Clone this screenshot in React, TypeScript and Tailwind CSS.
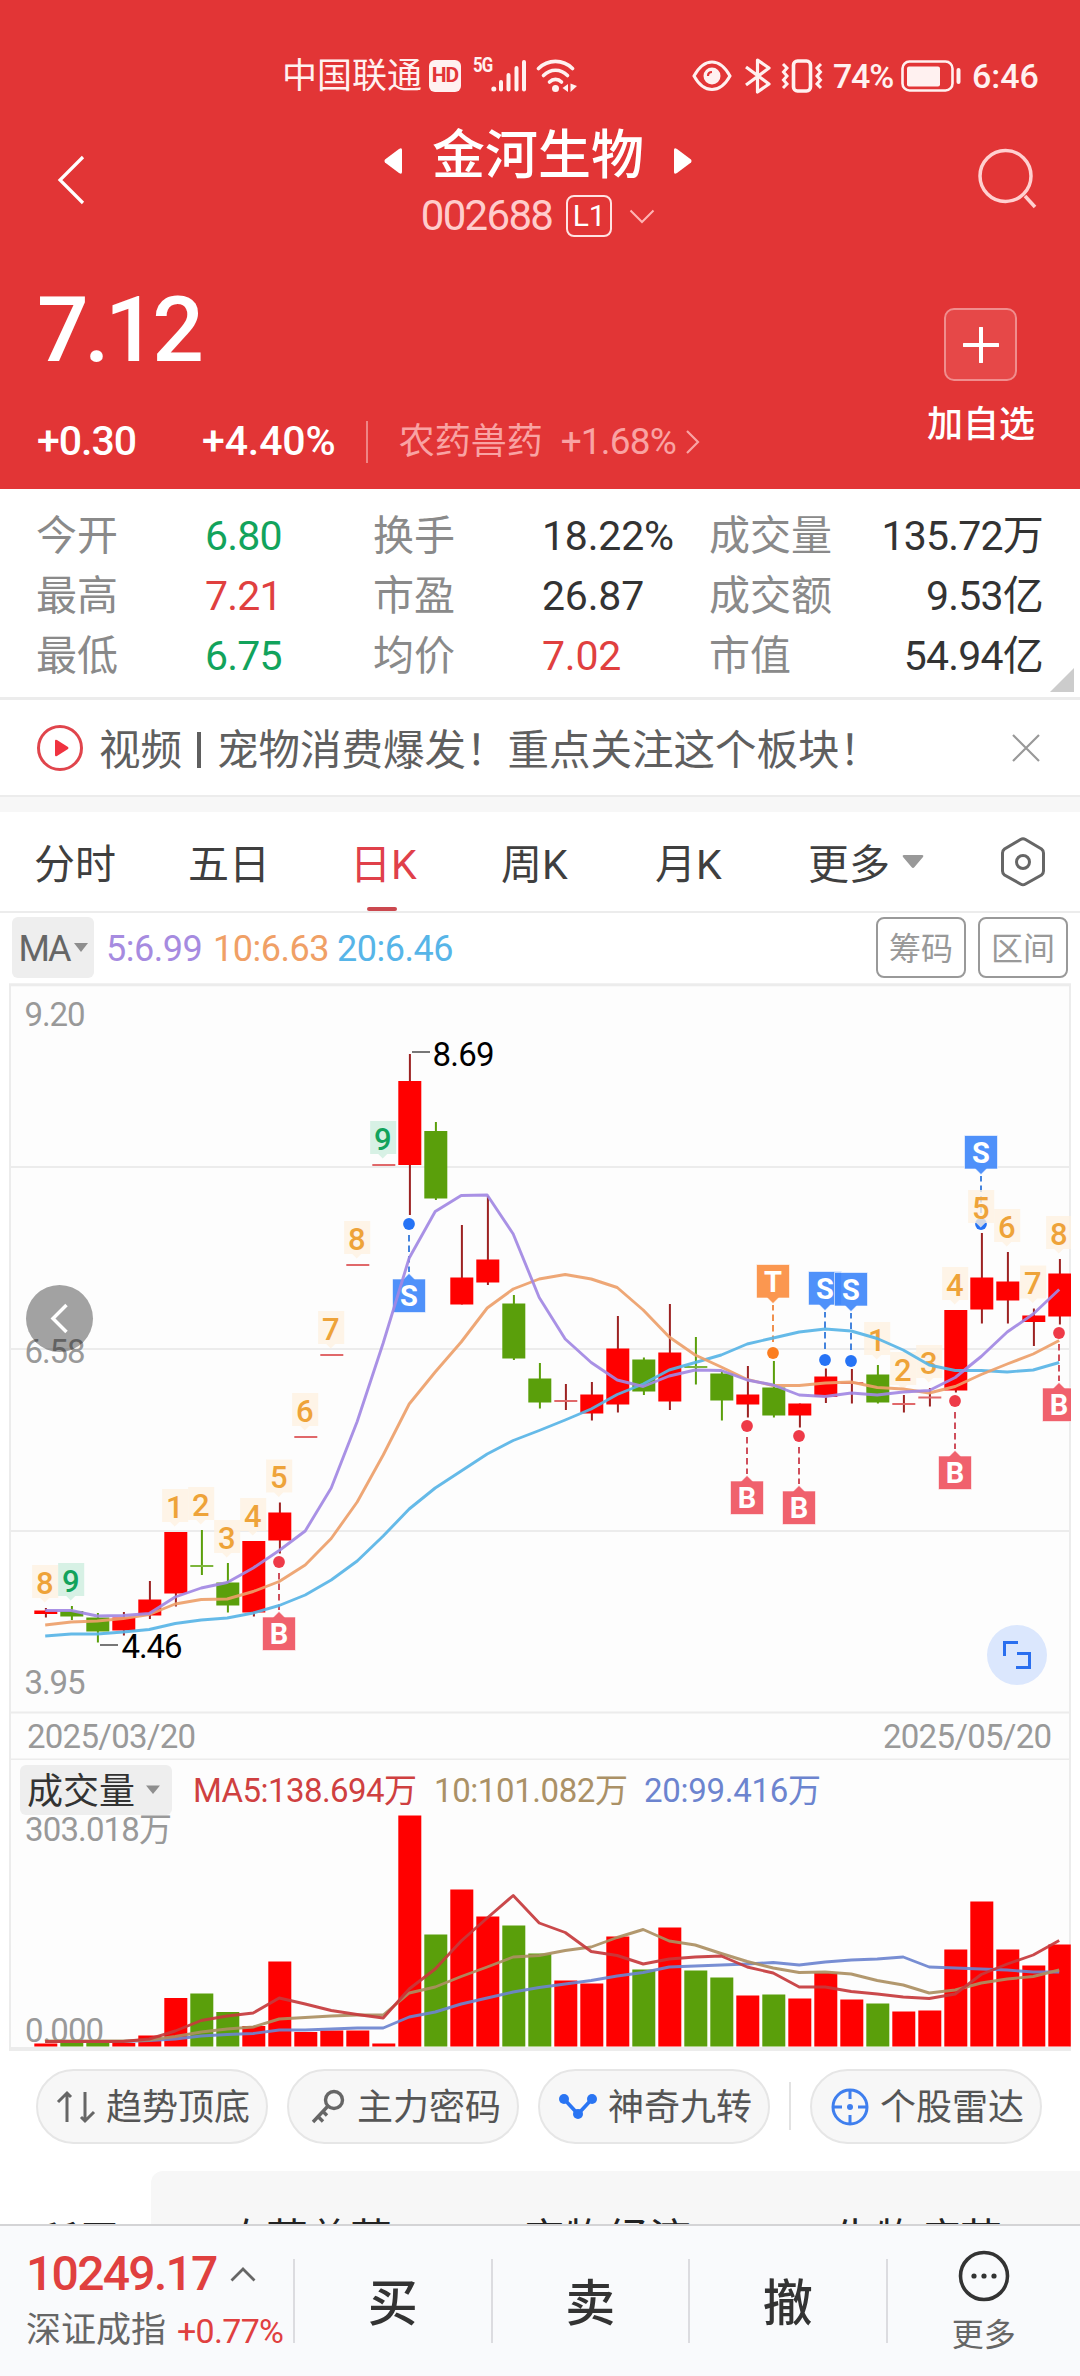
import React from "react";

// [high, bodyTop, bodyBottom, low, direction]
type Candle = [number, number, number, number, "up" | "down"];

const candles: Candle[] = [
  [1608, 1610.5, 1614, 1617.5, "up"],
  [1606, 1611, 1616.5, 1620, "down"],
  [1613, 1617.5, 1631.5, 1642.5, "down"],
  [1612, 1617.5, 1630.5, 1635.5, "up"],
  [1581, 1599.5, 1615.5, 1619, "up"],
  [1532, 1532, 1593.5, 1606.5, "up"],
  [1530, 1565, 1567, 1575, "down"],
  [1563, 1582.5, 1605.5, 1612.5, "down"],
  [1541, 1541, 1612.5, 1616.5, "up"],
  [1502.5, 1512.5, 1540.5, 1553.5, "up"],
  [1436, 1436, 1438, 1438, "up"],
  [1354, 1354, 1356, 1356, "up"],
  [1264, 1264, 1266, 1266, "up"],
  [1164, 1164, 1166, 1166, "up"],
  [1054, 1081, 1165, 1215, "up"],
  [1122, 1131, 1198.5, 1200, "down"],
  [1225, 1277.5, 1304.5, 1304.5, "up"],
  [1196, 1259.5, 1282.5, 1285, "up"],
  [1295, 1303.5, 1358.5, 1360, "down"],
  [1363, 1378.5, 1402.5, 1408.5, "down"],
  [1384, 1400, 1402, 1410, "up"],
  [1382, 1394.5, 1413.5, 1420.5, "up"],
  [1316, 1348.5, 1404.5, 1412.5, "up"],
  [1357.5, 1359.5, 1391.5, 1395, "down"],
  [1304, 1352.5, 1401.5, 1410, "up"],
  [1337, 1366, 1368, 1384.5, "down"],
  [1371, 1373.5, 1400.5, 1420.5, "down"],
  [1366, 1394.5, 1404.5, 1417.5, "up"],
  [1361, 1387.5, 1415.5, 1417.5, "down"],
  [1403.5, 1403.5, 1415.5, 1427.5, "up"],
  [1368.5, 1376.5, 1397, 1403, "up"],
  [1369, 1382, 1384, 1403.5, "up"],
  [1365, 1374.5, 1402.5, 1403.5, "down"],
  [1395, 1403, 1405, 1412.5, "up"],
  [1388, 1396.5, 1398.5, 1406.5, "up"],
  [1310, 1310, 1390.5, 1392.5, "up"],
  [1233, 1277.5, 1309.5, 1323.5, "up"],
  [1252, 1281.5, 1300.5, 1323.5, "up"],
  [1308.5, 1315.5, 1322, 1346, "up"],
  [1259, 1273.5, 1316.5, 1324.5, "up"],
];

const ma5 = [
  1610.5, 1610.5, 1616, 1615.5, 1613.5, 1597, 1588, 1582.5, 1568, 1550.5, 1531,
  1488, 1421.5, 1343, 1258, 1211.5, 1195.5, 1195, 1234, 1297.5, 1339, 1362.5,
  1380, 1386.5, 1376, 1370, 1370.5, 1380, 1385, 1395, 1396.5, 1393, 1395, 1392,
  1390.5, 1377.5, 1356.5, 1332, 1314, 1289.5,
];
const ma10 = [
  1625, 1622, 1621, 1618.5, 1614.5, 1604, 1599.5, 1599, 1591.5, 1581.5, 1565,
  1538.5, 1502, 1455, 1404, 1372, 1342, 1308, 1289, 1279, 1274.5, 1279, 1287.5,
  1310, 1337, 1355, 1367, 1379.5, 1385.5, 1385.5, 1383, 1382, 1387.5, 1389,
  1393, 1386.5, 1374.5, 1364, 1354, 1340.5,
];
const ma20 = [
  1636, 1634, 1634, 1632, 1629.5, 1623.5, 1620, 1618, 1613, 1605.5, 1595, 1580,
  1561, 1536, 1509, 1488, 1471, 1454, 1440.5, 1430.5, 1420, 1409, 1394.5, 1384,
  1370, 1362.5, 1355, 1344, 1338, 1332, 1329, 1331, 1338.5, 1350, 1365, 1370.5,
  1370.5, 1372, 1370, 1362.5,
];

const volumes = [
  2043.5, 2043, 2043, 2043, 2035.5, 1998, 1993.5, 2012, 2026, 1961.5, 2032,
  2030.5, 2030.5, 2043.5, 1815.5, 1934.5, 1889.5, 1916.5, 1925.5, 1953.5, 1980.5,
  1983.5, 1936.5, 1969.5, 1927.5, 1970.5, 1977.5, 1995.5, 1994.5, 1998.5, 1973,
  1999.5, 2003.5, 2011.5, 2010.5, 1949.5, 1901.5, 1949.5, 1965.5, 1944.5,
];
const vol5 = [
  2041.5, 2041.5, 2041.5, 2041.5, 2039, 2031, 2020.5, 2016, 2013, 1998, 2004,
  2010.5, 2014.5, 2018, 1989, 1969, 1941, 1918, 1895.5, 1923, 1932.5, 1951.5,
  1955.5, 1964, 1959, 1957, 1956, 1967, 1973, 1987, 1987, 1991.5, 1994, 1997,
  1998.5, 1994, 1974.5, 1964, 1955, 1940.5,
];
const vol10 = [
  2041, 2041, 2041, 2041, 2040, 2036.5, 2032, 2029, 2027, 2019, 2017.5, 2016,
  2015, 2015, 1993, 1987, 1976.5, 1967, 1957, 1955.5, 1950.5, 1947, 1937.5,
  1929.5, 1941, 1945, 1953.5, 1961.5, 1968, 1972.5, 1972, 1974, 1980.5, 1985,
  1993, 1990, 1983, 1979, 1976.5, 1970,
];
const vol20 = [
  2041.5, 2041.5, 2041.5, 2041.5, 2040.5, 2039, 2036, 2034.5, 2033.5, 2030,
  2030, 2029, 2028, 2028, 2017, 2012, 2004, 1998, 1992, 1987.5, 1984, 1980.5,
  1976, 1972.5, 1967, 1966, 1965, 1964, 1962.5, 1965, 1962, 1960, 1959, 1957,
  1967, 1968, 1969, 1970, 1972, 1972,
];

const counts: [number, string][] = [
  [0, "8"], [1, "9"], [5, "1"], [6, "2"], [7, "3"], [8, "4"], [9, "5"],
  [10, "6"], [11, "7"], [12, "8"], [13, "9"], [32, "1"], [33, "2"], [34, "3"],
  [35, "4"], [36, "5"], [37, "6"], [38, "7"], [39, "8"],
];

// index, letter, dot y, label below or above the dot
const trades: [number, "B" | "S" | "T", number, "below" | "above"][] = [
  [9, "B", 1562, "below"],
  [14, "S", 1224, "below"],
  [27, "B", 1426, "below"],
  [28, "T", 1353, "above"],
  [29, "B", 1436, "below"],
  [30, "S", 1360, "above"],
  [31, "S", 1361, "above"],
  [35, "B", 1401, "below"],
  [36, "S", 1224, "above"],
  [39, "B", 1333, "below"],
];

const tradeColors = {
  B: { box: "#ef5562", dot: "#ee3a48", dash: "#cf4f5c" },
  S: { box: "#4289fa", dot: "#2673f5", dash: "#4584dd" },
  T: { box: "#fb8f43", dot: "#fb7d20", dash: "#f0904e" },
};

const cx = (i: number) => 45.8 + i * 26;

const points = (ys: number[]) =>
  ys.map((y, i) => `${cx(i) - 0.6},${y}`).join(" ");

const Line = ({ ys, color }: { ys: number[]; color: string }) => (
  <polyline
    points={points(ys)}
    fill="none"
    stroke={color}
    strokeWidth="2.900"
    strokeLinejoin="round"
    opacity="0.92"
  />
);

const CandleShape = ({ candle, x }: { candle: Candle; x: number }) => {
  const [high, top, bottom, low, dir] = candle;
  const thin = bottom - top <= 2;
  const flat = thin && high === top;
  const up = dir === "up";
  return (
    <g>
      {!flat && (
        <rect
          x={x - 0.9}
          y={high}
          width="2"
          height={low - high}
          fill={up ? "#9c2222" : "#5a9f0b"}
        />
      )}
      <rect
        x={x - 11.5}
        y={top}
        width="23"
        height={bottom - top}
        fill={thin ? (up ? "#e0686a" : "#7db53c") : up ? "#ff0000" : "#5a9f0b"}
      />
    </g>
  );
};

const Count = ({ x, y, text }: { x: number; y: number; text: string }) => {
  const nine = text === "9";
  return (
    <g>
      <path
        d={`M${x - 13} ${y}h26v33h-9l-4.500 4.500l-4.500 -4.500h-8z`}
        fill={nine ? "#cdeedf" : "#fef1e1"}
        fillOpacity="0.8"
      />
      <text
        x={x - 0.5}
        y={y + 28.5}
        fontSize="31"
        fontWeight="500"
        textAnchor="middle"
        fill={nine ? "#12a35c" : "#eea339"}
      >
        {text}
      </text>
    </g>
  );
};

const Trade = ({
  x,
  y,
  letter,
  side,
}: {
  x: number;
  y: number;
  letter: "B" | "S" | "T";
  side: "below" | "above";
}) => {
  const color = tradeColors[letter];
  const below = side === "below";
  const top = below ? y + 55 : y - 88.5;
  return (
    <g>
      <circle cx={x} cy={y} r="5.900" fill={color.dot} />
      <path
        d={below ? `M${x} ${y + 11}V${y + 48}` : `M${x} ${y - 11}V${y - 48}`}
        stroke={color.dash}
        strokeWidth="2"
        strokeDasharray="6.500 4"
      />
      <path
        d={
          below
            ? `M${x - 16.5} ${top}h11l5.500 -5.500l5.500 5.500h11v33.500h-33z`
            : `M${x - 16.5} ${top}h33v33.500h-11l-5.500 5.500l-5.500 -5.500h-11z`
        }
        fill={color.box}
        fillOpacity="0.93"
        stroke="#fff"
        strokeOpacity="0.6"
        strokeWidth="1"
      />
      <text
        x={x}
        y={top + 27}
        fontSize="29"
        fontWeight="700"
        textAnchor="middle"
        fill="#fff"
      >
        {letter}
      </text>
    </g>
  );
};

const PriceChart = () => (
  <svg width="1080" height="777" viewBox="0 983 1080 777" className="block">
    <defs>
      <clipPath id="plot">
        <rect x="10" y="984" width="1061" height="776" />
      </clipPath>
    </defs>
    <rect x="10" y="984" width="1061" height="776" fill="#fdfdfd" />
    <path
      d="M10 1167H1070M10 1349H1070M10 1531H1070M10 1712.500H1070M10 1759.500H1070"
      stroke="#ececec"
      strokeWidth="2"
    />
    <path d="M9 984.700H1071" stroke="#ececec" strokeWidth="3" />
    <path d="M10 984V1760M1070 984V1760" stroke="#ececec" strokeWidth="2" />

    <g fontSize="33" fill="#999">
      <text x="24.500" y="1026" textLength="61">9.20</text>
      <text x="24.500" y="1363" textLength="61">6.58</text>
      <text x="24.500" y="1694" textLength="61">3.95</text>
      <text x="27" y="1748" textLength="169">2025/03/20</text>
      <text x="883" y="1748" textLength="169">2025/05/20</text>
    </g>

    <g clipPath="url(#plot)">
      {candles.map((candle, i) => (
        <CandleShape key={i} candle={candle} x={cx(i)} />
      ))}
      {trades.map(([i, letter, y, side]) => (
        <Trade key={i} x={cx(i) - 0.8} y={y} letter={letter} side={side} />
      ))}
      {counts.map(([i, text]) => (
        <Count key={i} x={cx(i) - 0.6} y={candles[i][0] - 43} text={text} />
      ))}
      <Line ys={ma20} color="#58b4e6" />
      <Line ys={ma10} color="#eda06a" />
      <Line ys={ma5} color="#a288e3" />
    </g>

    <path d="M412 1052H430M100 1645H118" stroke="#777" strokeWidth="2" />
    <g fontSize="33" fill="#000">
      <text x="432.500" y="1066" textLength="62">8.69</text>
      <text x="121.500" y="1658" textLength="61">4.46</text>
    </g>

    <circle cx="59.500" cy="1318.500" r="33.500" fill="#000" fillOpacity="0.36" />
    <path
      d="M66.500 1305L53 1318.500L66.500 1332"
      fill="none"
      stroke="#fff"
      strokeWidth="3.500"
    />
    <circle cx="1017" cy="1655" r="30" fill="#dbe7fd" />
    <path
      d="M1018 1642.500H1004.500V1656M1016 1667.500H1029.500V1653.500H1017"
      fill="none"
      stroke="#2a6fef"
      strokeWidth="3"
    />
  </svg>
);

const VolumeChart = () => (
  <svg width="1080" height="292" viewBox="0 1760 1080 292" className="block">
    <rect x="10" y="1760" width="1061" height="288" fill="#fdfdfd" />
    <path d="M10 1760V2050M1070 1760V2050" stroke="#ececec" strokeWidth="2" />
    <path d="M9 2049H1071" stroke="#ececec" strokeWidth="4" />
    <rect x="20" y="1765" width="152" height="50" rx="6" fill="#eee" />
    <text x="27" y="1804" fontSize="36" fill="#333">成交量</text>
    <path d="M146 1785.500H160L153 1794z" fill="#8e8e8e" />
    <g fontSize="33">
      <text x="193" y="1802" textLength="224" fill="#cf4040">MA5:138.694万</text>
      <text x="434" y="1802" textLength="194" fill="#ab9166">10:101.082万</text>
      <text x="644" y="1802" textLength="177" fill="#6c84cf">20:99.416万</text>
      <text x="25" y="1841" textLength="147" fill="#999">303.018万</text>
    </g>
    <g>
      {volumes.map((y, i) => (
        <rect
          key={i}
          x={cx(i) - 11.5}
          y={y}
          width={i === 39 ? 22.5 : 23}
          height={2046.5 - y}
          fill={candles[i][4] === "up" ? "#ff0000" : "#5a9f0b"}
        />
      ))}
      <text x="25" y="2042" fontSize="33" textLength="79" fill="#999">0.000</text>
      <Line ys={vol20} color="#6c84cf" />
      <Line ys={vol10} color="#ab8f62" />
      <Line ys={vol5} color="#c63a3c" />
    </g>
  </svg>
);

const StatusBar = () => (
  <div className="flex h-[52px] items-center pl-[282px] text-[#fff1f0]">
    <span className="w-[147px] pt-0.5 text-[35px] leading-[52px] whitespace-nowrap">
      中国联通
    </span>
    <span className="flex h-8 w-8 items-center justify-center rounded-md bg-[#fff1f0] text-[21px] font-bold tracking-[-1px] text-[#e23536]">
      HD
    </span>
    <span className="ml-3 w-[18px] origin-left -translate-y-[11px] scale-x-[0.8] text-[21px] leading-none font-bold tracking-[-1px]">
      5G
    </span>
    <svg width="36" height="34" viewBox="0 0 36 34" className="shrink-0">
      <g fill="currentColor">
        <circle cx="2.800" cy="30" r="2.500" />
        <rect x="8" y="21" width="4" height="11.500" rx="2" />
        <rect x="15.500" y="14" width="4" height="18.500" rx="2" />
        <rect x="23.500" y="7" width="4" height="25.500" rx="2" />
        <rect x="31" y="1" width="4" height="31.500" rx="2" />
      </g>
    </svg>
    <svg width="42" height="34" viewBox="0 0 42 34" className="ml-[9px] shrink-0">
      <g fill="none" stroke="currentColor" strokeWidth="3.600" strokeLinecap="round">
        <path d="M2.500 9.500C12 0 27 0 36.500 9.500" />
        <path d="M7.500 16.500C14.500 9.500 24.500 9.500 31.500 16.500" />
        <path d="M13.500 23C17 19.500 22 19.500 25.500 23" />
      </g>
      <circle cx="19.500" cy="29.500" r="3.500" fill="currentColor" />
      <path d="M32 25V33L26.500 29zM34.500 24.500V33L41 27z" fill="currentColor" />
    </svg>
    <svg width="40" height="32" viewBox="0 0 40 32" className="ml-[114px] shrink-0">
      <path
        d="M2 16C7 7 13 2 20 2S33 7 38 16C33 25 27 29.500 20 29.500S7 25 2 16z"
        fill="none"
        stroke="currentColor"
        strokeWidth="3"
      />
      <circle cx="20" cy="16" r="8.500" fill="currentColor" />
      <path d="M16 16Q16 12 20 12" fill="none" stroke="#e23536" strokeWidth="2.200" />
    </svg>
    <svg width="28" height="36" viewBox="0 0 28 36" className="ml-3 shrink-0">
      <path
        d="M2 9L25 26L13.500 34V2L25 10L2 27"
        fill="none"
        stroke="currentColor"
        strokeWidth="3.200"
        strokeLinejoin="round"
      />
    </svg>
    <svg width="42" height="34" viewBox="0 0 42 34" className="ml-[9px] shrink-0">
      <rect
        x="12.500"
        y="2"
        width="17"
        height="30"
        rx="4"
        fill="none"
        stroke="currentColor"
        strokeWidth="3.600"
      />
      <path
        d="M2 5L6 9L2.500 13L6 17L2.500 21L6 25L2 29M40 5L36 9L39.500 13L36 17L39.500 21L36 25L40 29"
        fill="none"
        stroke="currentColor"
        strokeWidth="3"
      />
    </svg>
    <span className="ml-2.5 w-[68px] text-[34px] leading-none font-medium tracking-[-1.2px]">
      74%
    </span>
    <svg width="60" height="34" viewBox="0 0 60 34" className="shrink-0">
      <rect
        x="1.500"
        y="2.500"
        width="50"
        height="29"
        rx="7"
        fill="none"
        stroke="currentColor"
        strokeWidth="2.600"
      />
      <rect x="6" y="7.500" width="33" height="20" rx="2" fill="currentColor" />
      <rect x="55.500" y="9" width="4" height="16" rx="2" fill="currentColor" />
    </svg>
    <span className="ml-[11px] text-[34px] leading-none font-medium">6:46</span>
  </div>
);

const TitleBar = () => (
  <div className="flex h-[136px] items-start justify-between pt-2 pr-[43px] pl-[57px]">
    <svg width="28" height="50" viewBox="0 0 28 50" className="mt-[43px]">
      <path d="M26 2L3 25L26 48" fill="none" stroke="#fff" strokeWidth="3.200" />
    </svg>
    <div className="mt-1.5 ml-[14px] flex flex-col items-center text-white">
      <div className="flex h-[76px] items-center gap-[30px]">
        <svg width="18" height="26" viewBox="0 0 18 26" className="mt-2.5">
          <path d="M18 2V24Q18 27 15 25L1 14.500Q0 13 1 11.500L15 1Q18 -1 18 2z" fill="#fff" />
        </svg>
        <h1 className="text-[53px] leading-[76px] font-medium">金河生物</h1>
        <svg width="18" height="26" viewBox="0 0 18 26" className="mt-2.5">
          <path d="M0 2V24Q0 27 3 25L17 14.500Q18 13 17 11.500L3 1Q0 -1 0 2z" fill="#fff" />
        </svg>
      </div>
      <div className="-mt-0.5 flex h-12 items-center">
        <span className="text-[42px] leading-none tracking-[-1.7px] text-[#ffcccc]">
          002688
        </span>
        <span className="ml-[14px] flex h-[42px] w-[46px] items-center justify-center rounded-lg border-2 border-[#ffe3e3] text-[30px] leading-none">
          L1
        </span>
        <svg width="26" height="15" viewBox="0 0 26 15" className="ml-[17px]">
          <path d="M1.500 1.500L13 13L24.500 1.500" fill="none" stroke="#ffb4b4" strokeWidth="2" />
        </svg>
      </div>
    </div>
    <svg width="60" height="62" viewBox="0 0 60 62" className="mt-[35px]">
      <circle cx="28.500" cy="29" r="25.500" fill="none" stroke="#ffd0d0" strokeWidth="3.500" />
      <path d="M48 49L58 60" stroke="#ffd0d0" strokeWidth="3.500" />
    </svg>
  </div>
);

const Quote = () => (
  <div className="flex h-[249px] justify-between pr-[45px] pl-[37px] text-white">
    <div className="flex flex-col">
      <div className="mt-[37px] text-[91px] leading-[106px] font-medium tracking-[-4.5px]">
        7.12
      </div>
      <div className="mt-8 flex h-[54px] items-center text-[41px] font-medium tracking-[-1px]">
        <span className="w-[165px]">+0.30</span>
        <span className="tracking-[-0.1px]">+4.40%</span>
        <span className="ml-[30px] h-[42px] w-0.5 bg-[#ef8585]" />
        <span className="ml-[31px] text-[36px] font-normal tracking-normal text-[#f9a3a3]">
          农药兽药
        </span>
        <span className="ml-[18px] text-[37px] font-normal tracking-[-0.8px] text-[#f9a3a3]">
          +1.68%
        </span>
        <svg width="16" height="26" viewBox="0 0 16 26" className="ml-[9px]">
          <path d="M2 2L13 13L2 24" fill="none" stroke="#f9a3a3" strokeWidth="2.200" />
        </svg>
      </div>
    </div>
    <div className="mt-[68px] flex flex-col items-center">
      <div className="flex size-[73px] items-center justify-center rounded-[10px] border-2 border-[#f08d8d] bg-[#e64848]">
        <svg width="36" height="36" viewBox="0 0 36 36">
          <path d="M18 1V35M1 18H35" stroke="#fff" strokeWidth="4" strokeLinecap="round" />
        </svg>
      </div>
      <div className="mt-[18px] text-[36px] leading-[52px] font-medium">加自选</div>
    </div>
  </div>
);

const stats = [
  ["今开", "6.80", "换手", "18.22%", "成交量", "135.72万"],
  ["最高", "7.21", "市盈", "26.87", "成交额", "9.53亿"],
  ["最低", "6.75", "均价", "7.02", "市值", "54.94亿"],
];

const valueColor: Record<string, string> = {
  "6.80": "text-[#12a35c]",
  "6.75": "text-[#12a35c]",
  "7.21": "text-[#e0403f]",
  "7.02": "text-[#e0403f]",
};

const Stats = () => (
  <div className="relative h-[211px] border-b-[3px] border-[#ececec] pt-[17px] pr-[37px] pl-9">
    {stats.map((row) => (
      <div
        key={row[0]}
        className="grid h-[60px] grid-cols-[169px_168px_169px_167px_1fr_auto] items-center text-[41px] leading-[60px] whitespace-nowrap text-[#333]"
      >
        <span className="text-[#8a8a8a]">{row[0]}</span>
        <span className={`tracking-[-0.8px] ${valueColor[row[1]]}`}>{row[1]}</span>
        <span className="text-[#8a8a8a]">{row[2]}</span>
        <span className={`tracking-[-0.2px] ${valueColor[row[3]] ?? ""}`}>
          {row[3]}
        </span>
        <span className="text-[#8a8a8a]">{row[4]}</span>
        <span className="tracking-[-0.8px]">{row[5]}</span>
      </div>
    ))}
    <svg width="24" height="24" className="absolute right-1.5 bottom-[5px]">
      <path d="M24 0V24H0z" fill="#ccc" />
    </svg>
  </div>
);

const Notice = () => (
  <div className="flex h-[97px] items-center border-b-2 border-[#ececec] pr-10 pl-9">
    <svg width="48" height="48" viewBox="0 0 48 48">
      <circle cx="24" cy="24" r="21.500" fill="none" stroke="#e0454c" strokeWidth="3" />
      <path d="M19 17V31Q19 33 21 32L32 25Q33 24 32 23L21 16Q19 15 19 17z" fill="#f03340" />
    </svg>
    <p className="ml-[15px] flex pt-1.5 text-[41.5px] leading-[60px] whitespace-nowrap text-[#5f5f5f]">
      视频
      <span className="mr-4 ml-[15px] mt-[11px] h-[36px] w-[4px] bg-[#5f5f5f]" />
      宠物消费爆发！重点关注这个板块！
    </p>
    <svg width="28" height="28" viewBox="0 0 28 28" className="ml-auto shrink-0">
      <path d="M1 1L27 27M27 1L1 27" stroke="#999" strokeWidth="2.200" />
    </svg>
  </div>
);

const Tabs = () => (
  <div className="flex h-[101px] items-center border-b-2 border-[#ececec] pl-[34px] text-[41px] leading-[60px] whitespace-nowrap text-[#3f3f3f]">
    <span className="w-[154px] pt-1.5">分时</span>
    <span className="w-[162px] pt-1.5">五日</span>
    <span className="relative w-[151px] pt-1.5 text-[#e0404a]">
      日K
      <span className="absolute top-[78px] left-[17px] h-1 w-[30px] rounded-full bg-[#cb484f]" />
    </span>
    <span className="w-[154px] pt-1.5">周K</span>
    <span className="w-[153px] pt-1.5">月K</span>
    <span className="pt-1.5">更多</span>
    <svg width="22" height="14" viewBox="0 0 22 14" className="ml-3">
      <path d="M2 0H20Q22 0 21 2L12.500 12Q11 14 9.500 12L1 2Q0 0 2 0z" fill="#999" />
    </svg>
    <svg width="46" height="50" viewBox="0 0 46 50" className="ml-[76px]">
      <path
        d="M20.500 2.500Q23 1 25.500 2.500L41.500 12Q43.500 13.500 43.500 16V34Q43.500 36.500 41.500 38L25.500 47Q23 48.500 20.500 47L4.500 38Q2.500 36.500 2.500 34V16Q2.500 13.500 4.500 12z"
        fill="none"
        stroke="#666"
        strokeWidth="3"
      />
      <circle cx="23" cy="25" r="6.500" fill="none" stroke="#666" strokeWidth="3" />
    </svg>
  </div>
);

const Averages = () => (
  <div className="flex h-[70px] items-center pt-0.5 pr-3 pb-1 pl-3 text-[36px] whitespace-nowrap">
    <div className="flex h-[61px] w-[82px] items-center justify-center rounded-md bg-[#eee] pt-1 tracking-[-2px] text-[#666]">
      MA
      <svg width="14" height="9" viewBox="0 0 14 9" className="mb-1 ml-1">
        <path d="M0 0H14L7 9z" fill="#8e8e8e" />
      </svg>
    </div>
    <span className="ml-3 w-[107px] pt-1 tracking-[-0.5px] text-[#a68be0]">5:6.99</span>
    <span className="w-[124px] pt-1 tracking-[-0.5px] text-[#f0a066]">10:6.63</span>
    <span className="pt-1 tracking-[-0.5px] text-[#57b5e8]">20:6.46</span>
    <button className="ml-auto h-[61px] w-[90px] rounded-lg border-2 border-[#999] pt-1 text-[32px] text-[#999]">
      筹码
    </button>
    <button className="ml-3 h-[61px] w-[90px] rounded-lg border-2 border-[#999] pt-1 text-[32px] text-[#999]">
      区间
    </button>
  </div>
);

const Chip = ({ icon, label }: { icon: React.ReactNode; label: string }) => (
  <div className="flex h-[75px] w-[232px] items-center justify-between rounded-full border-2 border-[#e6e6e6] bg-[#f7f7f7] pr-4 pl-[18px] text-[36px] whitespace-nowrap text-[#555]">
    {icon}
    <span className="pt-0.5">{label}</span>
  </div>
);

const Tools = () => (
  <div className="flex h-[119px] items-start pt-[17px] pl-9">
    <Chip
      label="趋势顶底"
      icon={
        <svg width="40" height="36" viewBox="0 0 40 36" fill="none" stroke="#666" strokeWidth="3">
          <path d="M2 13L11 4L15 8M11 4V33M38 23L29 32L25 28M29 32V3" />
        </svg>
      }
    />
    <div className="w-[19px]" />
    <Chip
      label="主力密码"
      icon={
        <svg width="40" height="38" viewBox="0 0 40 38" fill="none" stroke="#666" strokeWidth="3.400">
          <circle cx="27" cy="12" r="8.500" />
          <path d="M21 18L6 34M11 28.500L16 33.500M16 23.500L20 27.500" />
        </svg>
      }
    />
    <div className="w-[19px]" />
    <Chip
      label="神奇九转"
      icon={
        <svg width="40" height="30" viewBox="0 0 40 30">
          <path d="M6 7L20 22L34 7" fill="none" stroke="#2a75f3" strokeWidth="3.600" />
          <g fill="#2a75f3">
            <circle cx="6" cy="7" r="5" />
            <circle cx="20" cy="22" r="5" />
            <circle cx="34" cy="7" r="5" />
          </g>
        </svg>
      }
    />
    <div className="mx-[19px] mt-[13px] h-12 w-0.5 bg-[#e2e2e2]" />
    <Chip
      label="个股雷达"
      icon={
        <svg width="40" height="40" viewBox="0 0 40 40" fill="none" stroke="#3f7fee" strokeWidth="3">
          <circle cx="20" cy="20" r="17" />
          <path d="M20 3V12M20 28V37M3 20H12M28 20H37" />
          <circle cx="20" cy="20" r="3" fill="#3f7fee" stroke="none" />
        </svg>
      }
    />
  </div>
);

const Related = () => (
  <div className="flex h-[53px] overflow-hidden pl-9 text-[42px] leading-[60px] whitespace-nowrap text-[#222]">
    <span className="w-[115px] pt-[42px]">所属</span>
    <div className="flex flex-1 rounded-tl-xl bg-[#f7f7f7] pt-[39px] pl-[73px]">
      <span className="w-[299px]">农药兽药</span>
      <span className="w-[311px]">宠物经济</span>
      <span>生物疫苗</span>
    </div>
  </div>
);

const BottomBar = () => (
  <div className="flex h-[152px] items-center border-t-2 border-[#d4d4d6] bg-[#f9fafc]">
    <div className="flex h-full w-[293px] flex-col pt-[15px] pl-[26px] whitespace-nowrap">
      <div className="flex h-[66px] items-center text-[48px] leading-none font-medium tracking-[-1.7px] text-[#e0403f]">
        10249.17
        <svg width="26" height="15" viewBox="0 0 26 15" className="ml-[13px]">
          <path d="M1.500 13.500L13 2L24.500 13.500" fill="none" stroke="#666" strokeWidth="2.800" />
        </svg>
      </div>
      <div className="-mt-0.5 flex h-[52px] items-center text-[35px] text-[#666]">
        深证成指
        <span className="ml-[11px] text-[34px] tracking-[-0.7px] text-[#e0403f]">
          +0.77%
        </span>
      </div>
    </div>
    {["买", "卖", "撤"].map((label) => (
      <div
        key={label}
        className="flex h-[84px] w-[197.500px] items-center justify-center border-l-2 border-[#dcdce0] pt-1.5 text-[50px] font-medium text-[#333]"
      >
        {label}
      </div>
    ))}
    <div className="flex h-[84px] flex-1 items-center justify-center border-l-2 border-[#dcdce0]">
      <div className="flex flex-col items-center pt-1.5 text-[32px] leading-[46px] text-[#666]">
        <svg width="52" height="52" viewBox="0 0 52 52">
          <circle cx="26" cy="26" r="23.500" fill="none" stroke="#333" strokeWidth="3.600" />
          <g fill="#333">
            <circle cx="16" cy="26" r="2.600" />
            <circle cx="26" cy="26" r="2.600" />
            <circle cx="36" cy="26" r="2.600" />
          </g>
        </svg>
        <span className="mt-2.5">更多</span>
      </div>
    </div>
  </div>
);

const App = () => {
  return (
    <div className="h-[2376px] w-[1080px] overflow-hidden bg-white font-['Roboto','Noto_Sans_CJK_SC',sans-serif]">
      <header className="h-[489px] bg-[#e23536] pt-[50px]">
        <StatusBar />
        <div className="pt-0.5">
          <TitleBar />
        </div>
        <Quote />
      </header>
      <Stats />
      <Notice />
      <div className="h-[15px] bg-[#f7f7f7]" />
      <Tabs />
      <Averages />
      <PriceChart />
      <VolumeChart />
      <Tools />
      <Related />
      <BottomBar />
    </div>
  );
};

export default App;
